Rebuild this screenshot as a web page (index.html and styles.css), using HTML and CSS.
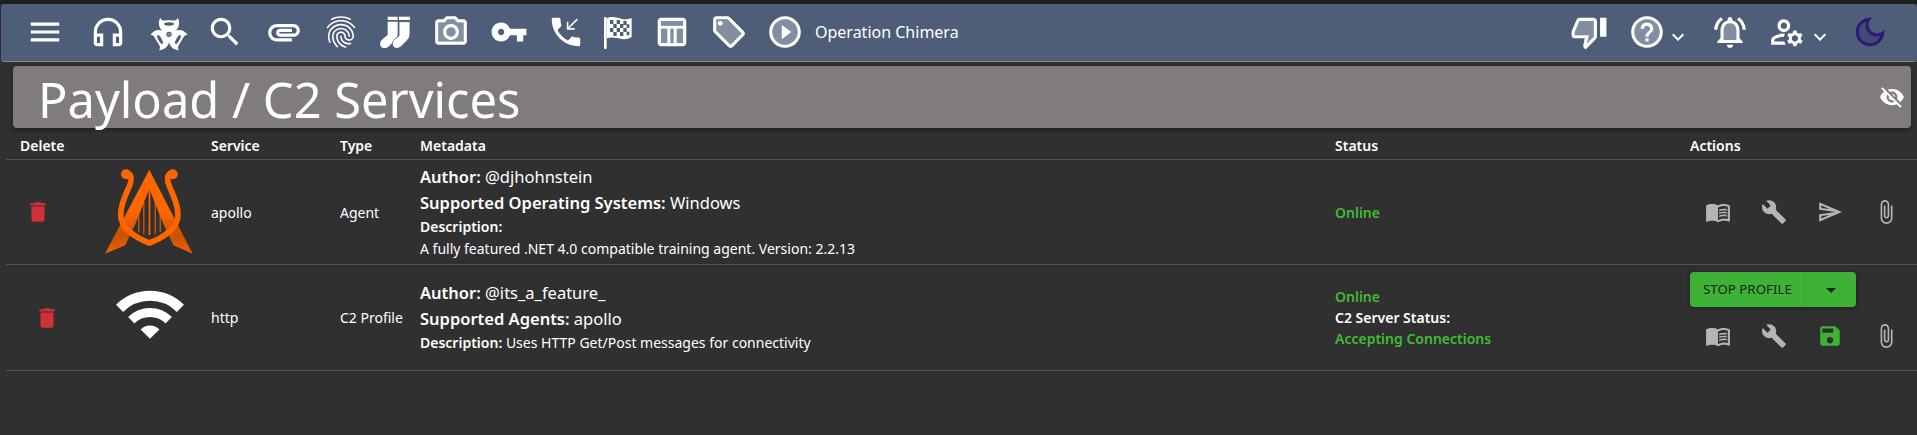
FILE: index.html
```html
<!doctype html>
<html lang="en">
<head>
    <meta charset="utf-8">
    <title>Payload / C2 Services</title>
    <link rel="stylesheet" href="styles.css">
</head>
<body>
<nav class="topbar">
    <div class="topbar-left">
        <span class="nav-icon"><svg viewBox="0 0 24 24"><path d="M3 18h18v-2H3v2zm0-5h18v-2H3v2zm0-7v2h18V6H3z"/></svg></span>
        <span class="nav-icon ic-headset"><svg viewBox="0 0 24 24"><path d="M12 3a9 9 0 0 0-9 9v7c0 1.1.9 2 2 2h4v-8H5v-1c0-3.87 3.13-7 7-7s7 3.13 7 7v1h-4v8h4c1.1 0 2-.9 2-2v-7a9 9 0 0 0-9-9zM7 15v4H5v-4h2zm12 4h-2v-4h2v4z"/></svg></span>
        <span class="nav-icon ic-bio"><svg viewBox="0 0 150 135">
            <g>
                <path d="M46 26C37 42 42 58 56 68h32c14-10 19-26 10-42-2 10-12 8-26 8s-24 2-26-8z"/>
                <ellipse class="cut" cx="72" cy="45" rx="15" ry="5"/>
            </g>
            <g transform="rotate(120 72 76)">
                <path d="M46 26C37 42 42 58 56 68h32c14-10 19-26 10-42-2 10-12 8-26 8s-24 2-26-8z"/>
                <ellipse class="cut" cx="72" cy="45" rx="15" ry="5"/>
            </g>
            <g transform="rotate(240 72 76)">
                <path d="M46 26C37 42 42 58 56 68h32c14-10 19-26 10-42-2 10-12 8-26 8s-24 2-26-8z"/>
                <ellipse class="cut" cx="72" cy="45" rx="15" ry="5"/>
            </g>
            <circle cx="72" cy="76" r="18"/>
            <circle class="cut" cx="72" cy="76" r="8"/>
            <circle class="tone" cx="72" cy="76" r="5"/>
        </svg></span>
        <span class="nav-icon ic-search"><svg viewBox="0 0 24 24"><path d="M15.5 14h-.79l-.28-.27C15.41 12.59 16 11.11 16 9.5 16 5.91 13.09 3 9.5 3S3 5.91 3 9.5 5.91 16 9.5 16c1.61 0 3.09-.59 4.23-1.57l.27.28v.79l5 4.99L20.49 19l-4.99-5zm-6 0C7.01 14 5 11.99 5 9.5S7.01 5 9.5 5 14 7.01 14 9.5 11.99 14 9.5 14z"/></svg></span>
        <span class="nav-icon ic-clip"><svg viewBox="0 0 24 24"><path d="M2 12.5C2 9.46 4.46 7 7.5 7H18c2.21 0 4 1.79 4 4s-1.79 4-4 4H9.5C8.12 15 7 13.88 7 12.5S8.12 10 9.5 10H17v2H9.41c-.55 0-.55 1 0 1H18c1.1 0 2-.9 2-2s-.9-2-2-2H7.5C5.57 9 4 10.57 4 12.5S5.57 16 7.5 16H17v2H7.5C4.46 18 2 15.54 2 12.5z"/></svg></span>
        <span class="nav-icon ic-finger"><svg viewBox="0 0 24 24"><path d="M17.81 4.47c-.08 0-.16-.02-.23-.06C15.66 3.42 14 3 12.01 3c-1.98 0-3.86.47-5.57 1.41-.24.13-.54.04-.68-.2-.13-.24-.04-.55.2-.68C7.82 2.52 9.86 2 12.01 2c2.13 0 3.99.47 6.03 1.52.25.13.34.43.21.67-.09.18-.26.28-.44.28zM3.5 9.72c-.1 0-.2-.03-.29-.09-.23-.16-.28-.47-.12-.7.99-1.4 2.25-2.5 3.75-3.27C9.98 4.04 14 4.03 17.15 5.65c1.5.77 2.76 1.86 3.75 3.25.16.22.11.54-.12.7-.23.16-.54.11-.7-.12-.9-1.26-2.04-2.25-3.39-2.94-2.87-1.47-6.54-1.47-9.4.01-1.36.7-2.5 1.7-3.4 2.96-.08.14-.23.21-.39.21zm6.25 12.07c-.13 0-.26-.05-.35-.15-.87-.87-1.34-1.43-2.01-2.64-.69-1.23-1.05-2.73-1.05-4.34 0-2.97 2.54-5.39 5.66-5.39s5.66 2.42 5.66 5.39c0 .28-.22.5-.5.5s-.5-.22-.5-.5c0-2.42-2.09-4.39-4.66-4.39-2.57 0-4.66 1.97-4.66 4.39 0 1.44.32 2.77.93 3.85.64 1.15 1.08 1.64 1.85 2.42.19.2.19.51 0 .71-.11.1-.24.15-.37.15zm7.17-1.85c-1.19 0-2.24-.3-3.1-.89-1.49-1.01-2.38-2.65-2.38-4.39 0-.28.22-.5.5-.5s.5.22.5.5c0 1.41.72 2.74 1.94 3.56.71.48 1.54.71 2.54.71.24 0 .64-.03 1.04-.1.27-.05.53.13.58.41.05.27-.13.53-.41.58-.57.11-1.07.12-1.21.12zM14.91 22c-.04 0-.09-.01-.13-.02-1.59-.44-2.63-1.03-3.72-2.1-1.4-1.39-2.17-3.24-2.17-5.22 0-1.62 1.38-2.94 3.08-2.94 1.7 0 3.08 1.32 3.08 2.94 0 1.07.93 1.94 2.08 1.94s2.08-.87 2.08-1.94c0-3.77-3.25-6.83-7.25-6.83-2.84 0-5.44 1.58-6.61 4.03-.39.81-.59 1.76-.59 2.8 0 .78.07 2.01.67 3.61.1.26-.03.55-.29.64-.26.1-.55-.04-.64-.29-.49-1.31-.73-2.61-.73-3.96 0-1.2.23-2.29.68-3.24 1.33-2.79 4.28-4.6 7.51-4.6 4.55 0 8.25 3.51 8.25 7.83 0 1.62-1.38 2.94-3.08 2.94s-3.08-1.32-3.08-2.94c0-1.07-.93-1.94-2.08-1.94s-2.08.87-2.08 1.94c0 1.71.66 3.31 1.87 4.51.95.94 1.86 1.46 3.27 1.85.27.07.42.35.35.61-.05.23-.26.38-.47.38z"/></svg></span>
        <span class="nav-icon ic-socks"><svg viewBox="0 0 135 135">
            <path d="M38 23h30v10H38zM38 38h30v36c0 12-6 18-14 26l-12 12c-8 8-20 8-25 0-4-8-1-16 6-22l15-12z"/>
            <path d="M72 23h33v10H72z"/>
            <path class="sock-front" d="M72 38h33v36c0 12-6 18-14 26l-12 12c-8 8-20 8-25 0-4-8-1-16 6-22l12-10z"/>
        </svg></span>
        <span class="nav-icon ic-camera"><svg viewBox="0 0 24 24"><path class="tone" d="M4 6h4.05l1.83-2h4.24l1.83 2H20v12H4z"/><path d="M20 4h-3.17L15 2H9L7.17 4H4c-1.1 0-2 .9-2 2v12c0 1.1.9 2 2 2h16c1.1 0 2-.9 2-2V6c0-1.1-.9-2-2-2zm0 14H4V6h4.05l1.83-2h4.24l1.83 2H20v12zM12 7c-2.76 0-5 2.24-5 5s2.24 5 5 5 5-2.24 5-5-2.24-5-5-5zm0 8c-1.65 0-3-1.35-3-3s1.35-3 3-3 3 1.35 3 3-1.35 3-3 3z"/></svg></span>
        <span class="nav-icon ic-key"><svg viewBox="0 0 24 24"><path d="M12.65 10C11.83 7.67 9.61 6 7 6c-3.31 0-6 2.69-6 6s2.69 6 6 6c2.61 0 4.83-1.67 5.65-4H17v4h4v-4h2v-4H12.65zM7 14c-1.1 0-2-.9-2-2s.9-2 2-2 2 .9 2 2-.9 2-2 2z"/></svg></span>
        <span class="nav-icon ic-phone"><svg viewBox="0 0 24 24"><path d="M20 15.5c-1.25 0-2.45-.2-3.57-.57-.35-.11-.74-.03-1.02.24l-2.2 2.2c-2.83-1.44-5.15-3.75-6.59-6.59l2.2-2.21c.28-.26.36-.65.25-1C8.7 6.45 8.5 5.25 8.5 4c0-.55-.45-1-1-1H4c-.55 0-1 .45-1 1 0 9.39 7.61 17 17 17 .55 0 1-.45 1-1v-3.5c0-.55-.45-1-1-1zM19.5 4.2l-.7-.7-5.3 5.3V5.5h-1v5h5v-1h-3.3z"/></svg></span>
        <span class="nav-icon ic-flag"><svg viewBox="0 0 120 135">
            <path d="M12 27c0-2 2-3 4-3s4 1 4 3v90c0 2-2 3-4 3s-4-1-4-3z"/>
            <path d="M20 28c16-8 32-2 46 2 10 3 18 0 29-2v56c-11 6-19 8-29 6-14-3-30-8-46-2z"/>
            <g class="cut">
                <path d="M30 33h10v12H30zM50 33h10v12H50zM70 36h10v12H70zM40 45h10v12H40zM60 45h10v12H60zM80 46h8v11h-8zM30 57h10v12H30zM50 57h10v12H50zM70 57h10v12H70zM40 69h10v12H40zM60 69h10v12H60zM80 68h8v11h-8z"/>
            </g>
        </svg></span>
        <span class="nav-icon ic-table"><svg viewBox="0 0 24 24"><path class="tone" d="M5 10h4v9H5zm6 0h2v9h-2zm4 0h4v9h-4zM5 5h14v3H5z"/><path d="M5 3c-1.1 0-2 .9-2 2v14c0 1.1.9 2 2 2h14c1.1 0 2-.9 2-2V5c0-1.1-.9-2-2-2H5zm0 2h14v3H5V5zm0 5h4v9H5v-9zm6 0h2v9h-2v-9zm4 0h4v9h-4v-9z"/></svg></span>
        <span class="nav-icon ic-tag"><svg viewBox="0 0 24 24"><path class="tone" d="M4 4h7l9 9-7 7-9-9z"/><path d="M21.41 11.58l-9-9C12.05 2.22 11.55 2 11 2H4c-1.1 0-2 .9-2 2v7c0 .55.22 1.05.59 1.42l9 9c.36.36.86.58 1.41.58s1.05-.22 1.41-.59l7-7c.37-.36.59-.86.59-1.41s-.23-1.06-.59-1.42zM13 20.01L4 11V4h7v-.01l9 9-7 7.02z"/><circle cx="6.5" cy="6.5" r="1.5"/></svg></span>
        <span class="nav-icon ic-play"><svg viewBox="0 0 24 24"><circle class="tone" cx="12" cy="12" r="8"/><path d="M12 2C6.48 2 2 6.48 2 12s4.48 10 10 10 10-4.48 10-10S17.52 2 12 2zm0 18c-4.41 0-8-3.59-8-8s3.59-8 8-8 8 3.59 8 8-3.59 8-8 8zm-2-3.5l6-4.5-6-4.5z"/></svg></span>
        <span class="operation">Operation Chimera</span>
    </div>
    <div class="topbar-right">
        <span class="nav-icon"><svg viewBox="0 0 24 24"><path class="tone" d="M3 12l3-7h9v10l-4.34 4.34L12 14H3z"/><path d="M15 3H6c-.83 0-1.54.5-1.84 1.22l-3.02 7.05c-.09.23-.14.47-.14.73v2c0 1.1.9 2 2 2h6.31l-.95 4.57-.03.32c0 .41.17.79.44 1.06L9.83 23l6.59-6.59c.36-.36.58-.86.58-1.41V5c0-1.1-.9-2-2-2zm0 12l-4.34 4.34L12 14H3v-2l3-7h9v10zm4-12h4v12h-4z"/></svg></span>
        <span class="nav-icon ic-help"><svg viewBox="0 0 24 24"><circle class="tone" cx="12" cy="12" r="8"/><path d="M11 18h2v-2h-2v2zm1-16C6.48 2 2 6.48 2 12s4.48 10 10 10 10-4.48 10-10S17.52 2 12 2zm0 18c-4.41 0-8-3.59-8-8s3.59-8 8-8 8 3.59 8 8-3.59 8-8 8zm0-14c-2.21 0-4 1.79-4 4h2c0-1.1.9-2 2-2s2 .9 2 2c0 2-3 1.75-3 5h2c0-2.25 3-2.5 3-5 0-2.21-1.79-4-4-4z"/></svg></span>
        <span class="nav-chevron"><svg viewBox="0 0 24 24"><path d="M7.41 8.59L12 13.17l4.59-4.58L18 10l-6 6-6-6 1.41-1.41z"/></svg></span>
        <span class="nav-icon ic-bell"><svg viewBox="0 0 24 24"><path class="tone" d="M8 17v-6c0-2.48 1.51-4.5 4-4.5s4 2.02 4 4.5v6z"/><path d="M12 22c1.1 0 2-.9 2-2h-4c0 1.1.9 2 2 2zm6-6v-5c0-3.07-1.63-5.64-4.5-6.32V4c0-.83-.67-1.5-1.5-1.5s-1.5.67-1.5 1.5v.68C7.64 5.36 6 7.92 6 11v5l-2 2v1h16v-1l-2-2zm-2 1H8v-6c0-2.48 1.51-4.5 4-4.5s4 2.02 4 4.5v6zM7.58 4.08L6.15 2.65C3.75 4.48 2.17 7.3 2.03 10.5h2c.15-2.65 1.51-4.97 3.55-6.42zm12.39 6.42h2c-.15-3.2-1.73-6.02-4.12-7.85l-1.42 1.43c2.02 1.45 3.39 3.77 3.54 6.42z"/></svg></span>
        <span class="nav-icon ic-manage"><svg viewBox="0 0 24 24"><path d="M4 18v-.65c0-.34.16-.66.41-.81C6.1 15.53 8.03 15 10 15c.03 0 .05 0 .08.01.1-.7.3-1.37.59-1.98-.22-.02-.44-.03-.67-.03-2.42 0-4.68.67-6.61 1.82-.88.52-1.39 1.5-1.39 2.53V20h9.26c-.42-.6-.75-1.28-.97-2H4zM10 12c2.21 0 4-1.79 4-4s-1.79-4-4-4-4 1.79-4 4 1.79 4 4 4zm0-6c1.1 0 2 .9 2 2s-.9 2-2 2-2-.9-2-2 .9-2 2-2zM20.75 16c0-.22-.03-.42-.06-.63l1.14-1.01-1-1.73-1.45.49c-.32-.27-.68-.48-1.08-.63L18 11h-2l-.3 1.49c-.4.15-.76.36-1.08.63l-1.45-.49-1 1.73 1.14 1.01c-.03.21-.06.41-.06.63s.03.42.06.63l-1.14 1.01 1 1.73 1.45-.49c.32.27.68.48 1.08.63L16 21h2l.3-1.49c.4-.15.76-.36 1.08-.63l1.45.49 1-1.73-1.14-1.01c.03-.21.06-.41.06-.63zM17 18c-1.1 0-2-.9-2-2s.9-2 2-2 2 .9 2 2-.9 2-2 2z"/></svg></span>
        <span class="nav-chevron ic-chev2"><svg viewBox="0 0 24 24"><path d="M7.41 8.59L12 13.17l4.59-4.58L18 10l-6 6-6-6 1.41-1.41z"/></svg></span>
        <span class="nav-icon ic-moon"><svg viewBox="0 0 24 24"><path class="tone" d="M9.37 5.51C9.19 6.15 9.1 6.82 9.1 7.5c0 4.08 3.32 7.4 7.4 7.4.68 0 1.35-.09 1.99-.27C17.45 17.19 14.93 19 12 19c-3.86 0-7-3.14-7-7 0-2.93 1.81-5.45 4.37-6.49z"/><path d="M9.37 5.51C9.19 6.15 9.1 6.82 9.1 7.5c0 4.08 3.32 7.4 7.4 7.4.68 0 1.35-.09 1.99-.27C17.45 17.19 14.93 19 12 19c-3.86 0-7-3.14-7-7 0-2.93 1.81-5.45 4.37-6.49zM12 3c-4.97 0-9 4.03-9 9s4.03 9 9 9 9-4.03 9-9c0-.46-.04-.92-.1-1.36-.98 1.37-2.58 2.26-4.4 2.26-2.98 0-5.4-2.42-5.4-5.4 0-1.81.89-3.42 2.26-4.4-.44-.06-.9-.1-1.36-.1z"/></svg></span>
    </div>
</nav>

<header class="title-bar">
    <h1>Payload / C2 Services</h1>
    <svg class="eye" viewBox="0 0 24 24"><path d="M12 7c2.76 0 5 2.24 5 5 0 .65-.13 1.26-.36 1.83l2.92 2.92c1.51-1.26 2.7-2.89 3.43-4.75-1.73-4.39-6-7.5-11-7.5-1.4 0-2.74.25-3.98.7l2.16 2.16C10.74 7.13 11.35 7 12 7zM2 4.27l2.28 2.28.46.46C3.08 8.3 1.78 10.02 1 12c1.73 4.39 6 7.5 11 7.5 1.55 0 3.03-.3 4.38-.84l.42.42L19.73 22 21 20.73 3.27 3 2 4.27zM7.53 9.8l1.55 1.55c-.05.21-.08.43-.08.65 0 1.66 1.34 3 3 3 .22 0 .44-.03.65-.08l1.55 1.55c-.67.33-1.41.53-2.2.53-2.76 0-5-2.24-5-5 0-.79.2-1.53.53-2.2zm4.31-.78l3.15 3.15.02-.16c0-1.66-1.34-3-3-3l-.17.01z"/></svg>
</header>

<table class="services">
    <colgroup>
        <col class="col-delete"><col class="col-logo"><col class="col-service"><col class="col-type"><col class="col-meta"><col class="col-status"><col class="col-actions">
    </colgroup>
    <thead>
        <tr><th>Delete</th><th></th><th>Service</th><th>Type</th><th>Metadata</th><th>Status</th><th>Actions</th></tr>
    </thead>
    <tbody>
        <tr>
            <td><svg class="trash" viewBox="0 0 24 24"><path d="M6 19c0 1.1.9 2 2 2h8c1.1 0 2-.9 2-2V7H6v12zM19 4h-3.5l-1-1h-5l-1 1H5v2h14V4z"/></svg></td>
            <td class="logo-cell">
                <svg class="logo-apollo" viewBox="0 0 360 330">
                    <defs><linearGradient id="legs" x1="0" y1="0" x2="0" y2="1"><stop offset=".5" stop-color="#ff6600"/><stop offset=".78" stop-color="#c95100"/><stop offset="1" stop-color="#f26000"/></linearGradient></defs>
                    <path fill="url(#legs)" d="M178 38L45 290l61-25 30-64 42-106 42 106 30 64 58 25z"/>
                    <path fill="#ff6600" d="M145 170h3v56h-3zm15-36h3v98h-3zm16-36h5v136h-5zm18 36h3v98h-3zm15 36h3v56h-3z"/>
                    <circle cx="108" cy="52" r="15" fill="#ff6600"/><circle cx="248" cy="52" r="15" fill="#ff6600"/>
                    <path fill="none" stroke="#ff6600" stroke-width="17" d="M108 48c14 0 18 12 14 28-7 26-30 56-30 98 0 42 50 70 86 84 36-14 86-42 86-84 0-42-23-72-30-98-4-16 0-28 14-28"/>
                </svg>
            </td>
            <td>apollo</td>
            <td>Agent</td>
            <td class="meta">
                <div class="meta-big"><b>Author:</b> @djhohnstein</div>
                <div class="meta-big"><b>Supported Operating Systems:</b> Windows</div>
                <div class="meta-small"><b>Description:</b></div>
                <div class="meta-small">A fully featured .NET 4.0 compatible training agent. Version: 2.2.13</div>
            </td>
            <td class="status"><div class="online">Online</div></td>
            <td class="actions">
                <div class="action-icons">
                    <svg viewBox="0 0 24 24"><path d="M21 5c-1.11-.35-2.33-.5-3.5-.5-1.95 0-4.05.4-5.5 1.5-1.45-1.1-3.55-1.5-5.5-1.5S2.45 4.9 1 6v14.65c0 .25.25.5.5.5.1 0 .15-.05.25-.05C3.1 20.45 5.05 20 6.5 20c1.95 0 4.05.4 5.5 1.5 1.35-.85 3.8-1.5 5.5-1.5 1.65 0 3.35.3 4.75 1.05.1.05.15.05.25.05.25 0 .5-.25.5-.5V6c-.6-.45-1.25-.75-2-1zm0 13.5c-1.1-.35-2.3-.5-3.5-.5-1.7 0-4.15.65-5.5 1.5V8c1.35-.85 3.8-1.5 5.5-1.5 1.2 0 2.4.15 3.5.5v11.5zM17.5 10.5c.88 0 1.73.09 2.5.26V9.24c-.79-.15-1.64-.24-2.5-.24-1.7 0-3.24.29-4.5.83v1.66c1.13-.64 2.7-.99 4.5-.99zM13 12.49v1.66c1.13-.64 2.7-.99 4.5-.99.88 0 1.73.09 2.5.26V11.9c-.79-.15-1.64-.24-2.5-.24-1.7 0-3.24.3-4.5.83zM17.5 14.33c-1.7 0-3.24.29-4.5.83v1.66c1.13-.64 2.7-.99 4.5-.99.88 0 1.73.09 2.5.26v-1.52c-.79-.16-1.64-.24-2.5-.24z"/></svg>
                    <svg viewBox="0 0 24 24"><path d="M22.7 19l-9.1-9.1c.9-2.3.4-5-1.5-6.9-2-2-5-2.4-7.4-1.3L9 6 6 9 1.6 4.7C.4 7.1.9 10.1 2.9 12.1c1.9 1.9 4.6 2.4 6.9 1.5l9.1 9.1c.4.4 1 .4 1.4 0l2.3-2.3c.5-.4.5-1.1.1-1.4z"/></svg>
                    <svg viewBox="0 0 24 24"><path d="M4.01 6.03l7.51 3.22-7.52-1 .01-2.22m7.5 8.72L4 17.97v-2.22l7.51-1M2.01 3L2 10l15 2-15 2 .01 7L23 12 2.01 3z"/></svg>
                    <svg viewBox="0 0 24 24"><path d="M16.5 6v11.5c0 2.21-1.79 4-4 4s-4-1.79-4-4V5c0-1.38 1.12-2.5 2.5-2.5s2.5 1.12 2.5 2.5v10.5c0 .55-.45 1-1 1s-1-.45-1-1V6H10v9.5c0 1.38 1.12 2.5 2.5 2.5s2.5-1.12 2.5-2.5V5c0-2.21-1.79-4-4-4S7 2.79 7 5v12.5c0 3.04 2.46 5.5 5.5 5.5s5.5-2.46 5.5-5.5V6h-1.5z"/></svg>
                </div>
            </td>
        </tr>
        <tr>
            <td><svg class="trash trash-profile" viewBox="0 0 24 24"><path d="M6 19c0 1.1.9 2 2 2h8c1.1 0 2-.9 2-2V7H6v12zM19 4h-3.5l-1-1h-5l-1 1H5v2h14V4z"/></svg></td>
            <td class="logo-cell">
                <svg class="logo-wifi" viewBox="5 0 90 56">
                    <path class="wifi-arc wifi-outer" d="M19.6 22.4a43 43 0 0 1 60.8 0"/>
                    <path class="wifi-arc wifi-mid" d="M31.3 34.3a26.5 26.5 0 0 1 37.4 0"/>
                    <path d="M40.6 43.4a13.3 13.3 0 0 1 18.8 0L50 52.8z" fill="#fff"/>
                </svg>
            </td>
            <td>http</td>
            <td>C2 Profile</td>
            <td class="meta">
                <div class="meta-big"><b>Author:</b> @its_a_feature_</div>
                <div class="meta-big"><b>Supported Agents:</b> apollo</div>
                <div class="meta-small"><b>Description:</b> Uses HTTP Get/Post messages for connectivity</div>
            </td>
            <td class="status">
                <div class="online">Online</div>
                <div>C2 Server Status:</div>
                <div class="online">Accepting Connections</div>
            </td>
            <td class="actions actions-profile">
                <div class="split-button">
                    <span class="split-main">STOP PROFILE</span>
                    <span class="split-arrow"><svg viewBox="0 0 24 24"><path d="M7 10l5 5 5-5z"/></svg></span>
                </div>
                <div class="action-icons">
                    <svg viewBox="0 0 24 24"><path d="M21 5c-1.11-.35-2.33-.5-3.5-.5-1.95 0-4.05.4-5.5 1.5-1.45-1.1-3.55-1.5-5.5-1.5S2.45 4.9 1 6v14.65c0 .25.25.5.5.5.1 0 .15-.05.25-.05C3.1 20.45 5.05 20 6.5 20c1.95 0 4.05.4 5.5 1.5 1.35-.85 3.8-1.5 5.5-1.5 1.65 0 3.35.3 4.75 1.05.1.05.15.05.25.05.25 0 .5-.25.5-.5V6c-.6-.45-1.25-.75-2-1zm0 13.5c-1.1-.35-2.3-.5-3.5-.5-1.7 0-4.15.65-5.5 1.5V8c1.35-.85 3.8-1.5 5.5-1.5 1.2 0 2.4.15 3.5.5v11.5zM17.5 10.5c.88 0 1.73.09 2.5.26V9.24c-.79-.15-1.64-.24-2.5-.24-1.7 0-3.24.29-4.5.83v1.66c1.13-.64 2.7-.99 4.5-.99zM13 12.49v1.66c1.13-.64 2.7-.99 4.5-.99.88 0 1.73.09 2.5.26V11.9c-.79-.15-1.64-.24-2.5-.24-1.7 0-3.24.3-4.5.83zM17.5 14.33c-1.7 0-3.24.29-4.5.83v1.66c1.13-.64 2.7-.99 4.5-.99.88 0 1.73.09 2.5.26v-1.52c-.79-.16-1.64-.24-2.5-.24z"/></svg>
                    <svg viewBox="0 0 24 24"><path d="M22.7 19l-9.1-9.1c.9-2.3.4-5-1.5-6.9-2-2-5-2.4-7.4-1.3L9 6 6 9 1.6 4.7C.4 7.1.9 10.1 2.9 12.1c1.9 1.9 4.6 2.4 6.9 1.5l9.1 9.1c.4.4 1 .4 1.4 0l2.3-2.3c.5-.4.5-1.1.1-1.4z"/></svg>
                    <svg class="save" viewBox="0 0 24 24"><path d="M17 3H5c-1.11 0-2 .9-2 2v14c0 1.1.89 2 2 2h14c1.1 0 2-.9 2-2V7l-4-4zm-5 16c-1.66 0-3-1.34-3-3s1.34-3 3-3 3 1.34 3 3-1.34 3-3 3zm3-10H5V5h10v4z"/></svg>
                    <svg viewBox="0 0 24 24"><path d="M16.5 6v11.5c0 2.21-1.79 4-4 4s-4-1.79-4-4V5c0-1.38 1.12-2.5 2.5-2.5s2.5 1.12 2.5 2.5v10.5c0 .55-.45 1-1 1s-1-.45-1-1V6H10v9.5c0 1.38 1.12 2.5 2.5 2.5s2.5-1.12 2.5-2.5V5c0-2.21-1.79-4-4-4S7 2.79 7 5v12.5c0 3.04 2.46 5.5 5.5 5.5s5.5-2.46 5.5-5.5V6h-1.5z"/></svg>
                </div>
            </td>
        </tr>
    </tbody>
</table>
</body>
</html>
```

FILE: styles.css
```css
html {
    background: #303030;
}

body {
    margin: 0;
    height: 435px;
    overflow: hidden;
    background: #303030;
    color: #fff;
    font-family: "Noto Sans", "Open Sans", sans-serif;
    font-size: 14px;
    border-top: 4px solid #1e1e1e;
    box-sizing: border-box;
}

/* top navigation */
.topbar {
    display: flex;
    justify-content: space-between;
    align-items: center;
    height: 58px;
    margin-left: 1px;
    padding: 0 27px 2px 23.5px;
    box-sizing: border-box;
    background: #4e5d78;
    border-bottom: 1px solid #8a8a8a;
    border-radius: 4px;
}

.topbar-left,
.topbar-right {
    display: flex;
    align-items: center;
}

.nav-icon {
    display: flex;
    justify-content: center;
    width: 40px;
    flex: none;
}

.nav-icon svg {
    flex: none;
    width: 38px;
    height: 38px;
    fill: #fff;
}

.nav-icon .tone {
    opacity: 0.3;
}

.nav-chevron {
    display: flex;
    width: 24px;
    margin: 10px 0 0 -1px;
}

.nav-chevron svg {
    width: 24px;
    height: 24px;
    fill: #fff;
}

.ic-headset { margin-left: 23px; }
.ic-bio { margin-left: 22.5px; }
.ic-search { margin-left: 15px; }
.ic-clip { margin-left: 18.5px; }
.ic-finger { margin-left: 17.5px; }
.ic-socks { margin-left: 16px; }
.ic-camera { margin-left: 13.5px; }
.ic-key { margin-left: 18px; }
.ic-phone { margin-left: 17.5px; }
.ic-flag { margin-left: 14px; }
.ic-table { margin-left: 11.5px; }
.ic-tag { margin-left: 17.5px; }
.ic-play { margin-left: 16px; }
.ic-help { margin-left: 17.5px; }
.ic-bell { margin-left: 20px; }
.ic-manage { margin-left: 17px; }
.ic-chev2 { margin-left: 1px; }
.ic-moon { margin-left: 18.5px; }

.nav-icon.ic-bio svg {
    width: 50px;
    height: 45px;
}

.nav-icon.ic-socks svg {
    width: 45px;
    height: 45px;
}

.nav-icon.ic-flag svg {
    width: 40px;
    height: 45px;
}

.nav-icon .cut {
    fill: #4e5d78;
}

.sock-front {
    stroke: #4e5d78;
    stroke-width: 2.5;
}

.nav-icon.ic-moon svg {
    fill: #2c1a75;
}

.operation {
    margin-left: 10px;
    font-size: 16px;
    line-height: 20px;
}

/* page title */
.title-bar {
    display: flex;
    justify-content: space-between;
    align-items: center;
    height: 62px;
    margin: 4px 6px 0 13px;
    padding: 0 6.5px 0 25px;
    background: #807c7c;
    border-radius: 4px;
    box-shadow: 0 2px 4px rgba(0, 0, 0, 0.35);
}

.title-bar h1 {
    margin: 0;
    padding-top: 4px;
    font-size: 48.8px;
    font-weight: 400;
    line-height: 58px;
}

.eye {
    width: 26px;
    height: 26px;
    fill: #fff;
}

/* services table */
.services {
    width: 1911px;
    margin: 4px 0 0 6px;
    border-collapse: collapse;
    table-layout: fixed;
}

.col-delete { width: 82px; }
.col-logo { width: 109px; }
.col-service { width: 129px; }
.col-type { width: 80px; }
.col-meta { width: 915px; }
.col-status { width: 355px; }
.col-actions { width: 241px; }

.services th {
    height: 27px;
    padding: 0 14px;
    font-size: 14px;
    font-weight: 600;
    text-align: left;
    border-bottom: 1px solid #515151;
}

.services td {
    height: 104px;
    padding: 0 14px;
    font-size: 14px;
    line-height: 21px;
    white-space: nowrap;
    border-bottom: 1px solid #515151;
}

.services .logo-cell {
    padding-right: 0;
    text-align: center;
}

.trash {
    display: block;
    width: 26px;
    height: 26px;
    margin-left: 4.5px;
    fill: #d32f3a;
}

.trash-profile {
    margin-left: 13.5px;
}

.logo-apollo {
    display: block;
    width: 120px;
    height: 110px;
    margin: -4px 0 -4px -12px;
}

.logo-wifi {
    display: block;
    width: 90px;
    height: 56px;
    margin: -7px auto 0;
}

.wifi-arc {
    fill: none;
    stroke: #fff;
}

.wifi-outer { stroke-width: 10; }
.wifi-mid { stroke-width: 9; }

.services .meta b {
    font-weight: 600;
}

.meta-big {
    font-size: 16.5px;
    line-height: 26px;
}

.meta-small {
    font-size: 14px;
    line-height: 22.5px;
}

.status {
    font-weight: 600;
}

.online {
    color: #40bb35;
}

.services .actions-profile {
    height: 98px;
    padding-top: 7px;
    vertical-align: top;
}

.split-button {
    display: flex;
    width: 166px;
    height: 35px;
    margin-bottom: 16px;
    background: #3eb237;
    border-radius: 4px;
    box-shadow: 0 1px 4px rgba(0, 0, 0, 0.4);
    color: #0f2a10;
}

.split-main {
    display: flex;
    align-items: center;
    width: 115px;
    padding-left: 13px;
    box-sizing: border-box;
    font-size: 13.3px;
    border-right: 1px solid #389f32;
}

.split-arrow {
    display: flex;
    flex: 1;
    justify-content: center;
    align-items: center;
}

.split-arrow svg {
    width: 24px;
    height: 24px;
    fill: #0f2a10;
}

.action-icons {
    display: flex;
    gap: 30px;
    padding-left: 15px;
}

.action-icons svg {
    width: 26px;
    height: 26px;
    fill: #b5b5b5;
}

.action-icons .save {
    fill: #3eb237;
}
```
